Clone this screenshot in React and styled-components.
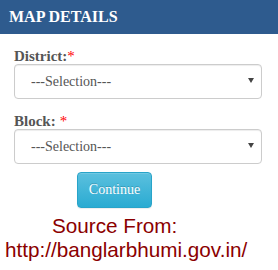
import React from "react";
import styled, { createGlobalStyle } from "styled-components";

const Global = createGlobalStyle`
  html, body { margin: 0; padding: 0; background: #fff; }
  body { width: 278px; height: 270px; overflow: hidden; font-family: "Liberation Serif", "Times New Roman", serif; }
  * { box-sizing: border-box; }
`;

const Panel = styled.div`
  width: 278px;
  display: flex;
  flex-direction: column;
`;

const Header = styled.div`
  height: 34px;
  background: #2e5b8e;
  color: #fff;
  font-family: "Liberation Serif", "Times New Roman", serif;
  font-weight: bold;
  font-size: 16px;
  line-height: 34px;
  padding-left: 9px;
`;

const Form = styled.div`
  display: flex;
  flex-direction: column;
  padding: 14px 16px 0 14px;
`;

const Label = styled.label`
  display: block;
  font-family: "Liberation Serif", "Times New Roman", serif;
  font-weight: bold;
  font-size: 15px;
  line-height: 16px;
  height: 16px;
  color: #555;
  margin-top: ${(p) => (p.$first ? "0" : "14px")};
`;

const Req = styled.span`
  color: #f00;
  font-weight: normal;
  margin-left: ${(p) => (p.$spaced ? "4px" : "0")};
`;

const SelectWrap = styled.div`
  position: relative;
  width: 248px;
  height: 35px;
`;

const Select = styled.select`
  appearance: none;
  -webkit-appearance: none;
  width: 100%;
  height: 100%;
  border: 1px solid #ccc;
  border-radius: 4px;
  background: #fff;
  box-shadow: inset 0 1px 1px rgba(0, 0, 0, 0.075);
  padding: 0 24px 0 16px;
  font-family: "Liberation Serif", "Times New Roman", serif;
  font-size: 14px;
  color: #555;
  outline: none;
`;

const Arrow = styled.svg`
  position: absolute;
  right: 8px;
  top: 14px;
  width: 6px;
  height: 5px;
  pointer-events: none;
`;

const ButtonRow = styled.div`
  display: flex;
  padding-left: 63px;
  margin-top: 8px;
`;

const Button = styled.button`
  width: 75px;
  height: 36px;
  border: 1px solid #28a4c9;
  border-radius: 4px;
  background-image: linear-gradient(to bottom, #5bc0de 0%, #2aabd2 100%);
  color: #fff;
  font-family: "Liberation Serif", "Times New Roman", serif;
  font-size: 14px;
  text-shadow: 0 -1px 0 rgba(0, 0, 0, 0.2);
  box-shadow: inset 0 1px 0 rgba(255, 255, 255, 0.15), 0 1px 1px rgba(0, 0, 0, 0.075);
  padding: 0;
  cursor: pointer;
`;

const Source = styled.div`
  display: flex;
  flex-direction: column;
  margin-top: 6px;
  font-family: "Liberation Sans", Arial, sans-serif;
  font-size: 20.7px;
  line-height: 24px;
  color: #8b0000;
`;

const SourceLine = styled.div`
  padding-left: ${(p) => p.$indent}px;
  white-space: nowrap;
`;

function Dropdown() {
  return (
    <SelectWrap>
      <Select defaultValue="">
        <option value="">---Selection---</option>
      </Select>
      <Arrow viewBox="0 0 6 5">
        <path d="M0 0 L6 0 L3 5 Z" fill="#444" />
      </Arrow>
    </SelectWrap>
  );
}

export default function App() {
  return (
    <>
      <Global />
      <Panel>
        <Header>MAP DETAILS</Header>
        <Form>
          <Label $first>
            District:<Req>*</Req>
          </Label>
          <Dropdown />
          <Label>
            Block:<Req $spaced>*</Req>
          </Label>
          <Dropdown />
          <ButtonRow>
            <Button>Continue</Button>
          </ButtonRow>
        </Form>
        <Source>
          <SourceLine $indent={52}>Source From:</SourceLine>
          <SourceLine $indent={5}>http://banglarbhumi.gov.in/</SourceLine>
        </Source>
      </Panel>
    </>
  );
}
